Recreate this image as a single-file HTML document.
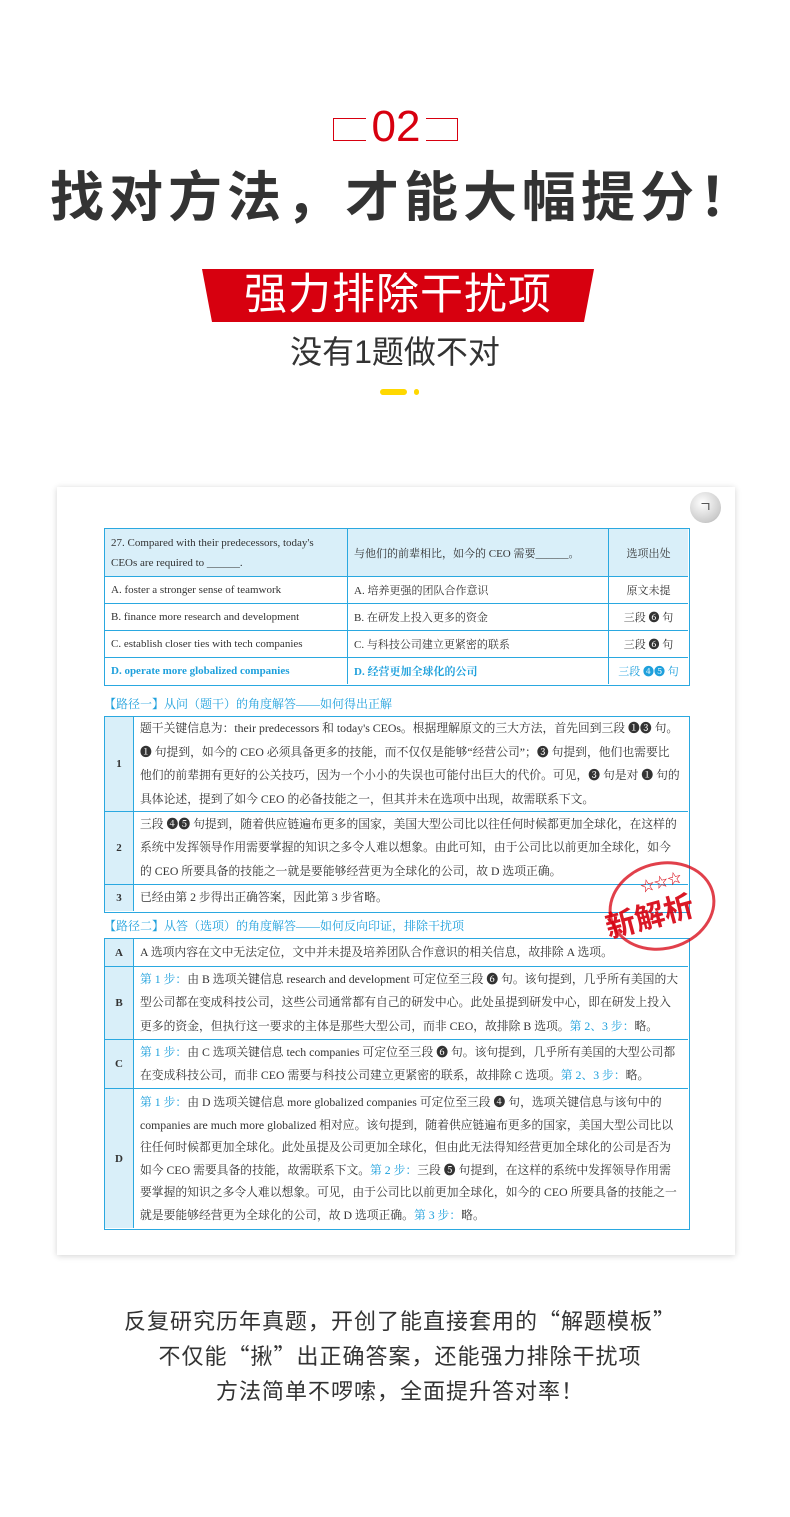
<!DOCTYPE html>
<html><head><meta charset="utf-8"><style>
*{margin:0;padding:0;box-sizing:border-box}
body{width:790px;height:1517px;background:#fff;position:relative;overflow:hidden;font-family:"Liberation Sans","Noto Sans CJK SC",sans-serif;color:#333}
.a{position:absolute}
.card{left:57px;top:487px;width:678px;height:768px;background:#fff;box-shadow:0 1px 6px rgba(0,0,0,.18)}
.t{position:absolute;border:1.5px solid #2aa8e0;font-family:"Liberation Serif","Noto Serif CJK SC",serif;font-size:11px;color:#333}
.c{position:absolute;border-right:1px solid #2aa8e0;border-bottom:1px solid #2aa8e0;display:flex;align-items:center;padding:0 6px;white-space:nowrap;overflow:hidden}
.hb{background:#d9eff9}
.bl{color:#1ea0dc;font-weight:bold}
.b{color:#1ea0dc}
.lab{position:absolute;left:104px;font-size:12px;color:#1ea0dc;font-family:"Liberation Serif","Noto Serif CJK SC",serif}
.n{justify-content:center;font-weight:bold;background:#d9eff9;padding:0}
.txt{line-height:23.5px;white-space:nowrap;font-size:11.8px}
</style></head><body>
<div class="a" style="left:333px;top:118px;width:125px;height:23px;border:1.5px solid #d7000f"></div>
<div class="a" style="left:366px;top:104px;width:60px;height:46px;background:#fff;color:#d7000f;font-size:44px;line-height:46px;text-align:center">02</div>
<div class="a" style="left:0;top:158px;width:808px;text-align:center;font-family:'Noto Sans CJK SC',sans-serif;font-size:54px;font-weight:bold;color:#333;letter-spacing:5px;line-height:70px">找对方法，才能大幅提分！</div>
<svg class="a" style="left:200px;top:269px" width="396" height="54"><polygon points="2,0 394,0 384,53 12,53" fill="#d7000f"/></svg>
<div class="a" style="left:200px;top:267px;width:396px;text-align:center;color:#fff;font-size:43px;line-height:56px;letter-spacing:1px">强力排除干扰项</div>
<div class="a" style="left:0;top:330px;width:790px;text-align:center;font-size:32px;line-height:44px;color:#333">没有1题做不对</div>
<div class="a" style="left:380px;top:389px;width:27px;height:6px;border-radius:3px;background:#ffd800"></div>
<div class="a" style="left:414px;top:389px;width:5px;height:6px;border-radius:3px;background:#ffd800"></div>

<div class="a card"></div>
<div class="a" style="left:690px;top:492px;width:31px;height:31px;border-radius:50%;background:radial-gradient(circle at 40% 35%,#fff,#ccc 70%,#999);"><span style="position:absolute;left:9px;top:5px;font-size:14px;color:#555">ㄱ</span></div>

<div class="t" style="left:104px;top:528px;width:586px;height:158px">
<div class="c hb" style="left:0;top:0;width:243px;height:48px;white-space:normal;line-height:20px;font-size:11px">27. Compared with their predecessors, today's CEOs are required to ______.</div>
<div class="c hb" style="left:243px;top:0;width:261px;height:48px">与他们的前辈相比，如今的 CEO 需要______。</div>
<div class="c hb" style="left:504px;top:0;width:79px;height:48px;justify-content:center;border-right:0">选项出处</div>
<div class="c" style="left:0;top:48px;width:243px;height:27px">A. foster a stronger sense of teamwork</div>
<div class="c" style="left:243px;top:48px;width:261px;height:27px">A. 培养更强的团队合作意识</div>
<div class="c" style="left:504px;top:48px;width:79px;height:27px;justify-content:center;border-right:0">原文未提</div>
<div class="c" style="left:0;top:75px;width:243px;height:27px">B. finance more research and development</div>
<div class="c" style="left:243px;top:75px;width:261px;height:27px">B. 在研发上投入更多的资金</div>
<div class="c" style="left:504px;top:75px;width:79px;height:27px;justify-content:center;border-right:0">三段 ❻ 句</div>
<div class="c" style="left:0;top:102px;width:243px;height:27px">C. establish closer ties with tech companies</div>
<div class="c" style="left:243px;top:102px;width:261px;height:27px">C. 与科技公司建立更紧密的联系</div>
<div class="c" style="left:504px;top:102px;width:79px;height:27px;justify-content:center;border-right:0">三段 ❻ 句</div>
<div class="c bl" style="left:0;top:129px;width:243px;height:26px;border-bottom:0">D. operate more globalized companies</div>
<div class="c bl" style="left:243px;top:129px;width:261px;height:26px;border-bottom:0">D. 经营更加全球化的公司</div>
<div class="c b" style="left:504px;top:129px;width:79px;height:26px;justify-content:center;border:0">三段 ❹❺ 句</div>
</div>

<div class="lab" style="top:695px">【路径一】从问（题干）的角度解答——如何得出正解</div>
<div class="t" style="left:104px;top:716px;width:586px;height:197px">
<div class="c n" style="left:0;top:0;width:29px;height:95px">1</div>
<div class="c txt" style="left:29px;top:0;width:554px;height:95px;border-right:0">题干关键信息为：their predecessors 和 today's CEOs。根据理解原文的三大方法，首先回到三段 ❶❸ 句。<br>❶ 句提到，如今的 CEO 必须具备更多的技能，而不仅仅是能够“经营公司”；❸ 句提到，他们也需要比<br>他们的前辈拥有更好的公关技巧，因为一个小小的失误也可能付出巨大的代价。可见，❸ 句是对 ❶ 句的<br>具体论述，提到了如今 CEO 的必备技能之一，但其并未在选项中出现，故需联系下文。</div>
<div class="c n" style="left:0;top:95px;width:29px;height:73px">2</div>
<div class="c txt" style="left:29px;top:95px;width:554px;height:73px;border-right:0">三段 ❹❺ 句提到，随着供应链遍布更多的国家，美国大型公司比以往任何时候都更加全球化，在这样的<br>系统中发挥领导作用需要掌握的知识之多令人难以想象。由此可知，由于公司比以前更加全球化，如今<br>的 CEO 所要具备的技能之一就是要能够经营更为全球化的公司，故 D 选项正确。</div>
<div class="c n" style="left:0;top:168px;width:29px;height:26px;border-bottom:0">3</div>
<div class="c txt" style="left:29px;top:168px;width:554px;height:26px;border:0">已经由第 2 步得出正确答案，因此第 3 步省略。</div>
</div>

<div class="lab" style="top:917px">【路径二】从答（选项）的角度解答——如何反向印证，排除干扰项</div>
<div class="t" style="left:104px;top:938px;width:586px;height:292px">
<div class="c n" style="left:0;top:0;width:29px;height:28px">A</div>
<div class="c txt" style="left:29px;top:0;width:554px;height:28px;border-right:0">A 选项内容在文中无法定位，文中并未提及培养团队合作意识的相关信息，故排除 A 选项。</div>
<div class="c n" style="left:0;top:28px;width:29px;height:73px">B</div>
<div class="c txt" style="left:29px;top:28px;width:554px;height:73px;border-right:0"><span><span class="b">第 1 步：</span>由 B 选项关键信息 research and development 可定位至三段 ❻ 句。该句提到，几乎所有美国的大<br>型公司都在变成科技公司，这些公司通常都有自己的研发中心。此处虽提到研发中心，即在研发上投入<br>更多的资金，但执行这一要求的主体是那些大型公司，而非 CEO，故排除 B 选项。<span class="b">第 2、3 步：</span>略。</span></div>
<div class="c n" style="left:0;top:101px;width:29px;height:49px">C</div>
<div class="c txt" style="left:29px;top:101px;width:554px;height:49px;border-right:0"><span><span class="b">第 1 步：</span>由 C 选项关键信息 tech companies 可定位至三段 ❻ 句。该句提到，几乎所有美国的大型公司都<br>在变成科技公司，而非 CEO 需要与科技公司建立更紧密的联系，故排除 C 选项。<span class="b">第 2、3 步：</span>略。</span></div>
<div class="c n" style="left:0;top:150px;width:29px;height:139px;border-bottom:0">D</div>
<div class="c txt" style="left:29px;top:150px;width:554px;height:139px;border:0;line-height:22.5px"><span><span class="b">第 1 步：</span>由 D 选项关键信息 more globalized companies 可定位至三段 ❹ 句，选项关键信息与该句中的<br>companies are much more globalized 相对应。该句提到，随着供应链遍布更多的国家，美国大型公司比以<br>往任何时候都更加全球化。此处虽提及公司更加全球化，但由此无法得知经营更加全球化的公司是否为<br>如今 CEO 需要具备的技能，故需联系下文。<span class="b">第 2 步：</span>三段 ❺ 句提到，在这样的系统中发挥领导作用需<br>要掌握的知识之多令人难以想象。可见，由于公司比以前更加全球化，如今的 CEO 所要具备的技能之一<br>就是要能够经营更为全球化的公司，故 D 选项正确。<span class="b">第 3 步：</span>略。</span></div>
</div>

<div class="a" style="left:608px;top:862px;width:108px;height:88px;border:3px solid rgba(215,0,15,.75);border-radius:50%;transform:rotate(-15deg)"></div>
<div class="a" style="left:640px;top:872px;color:#d7000f;font-size:14px;transform:rotate(-15deg)">☆☆☆</div>
<div class="a" style="left:604px;top:892px;color:#d7000f;font-size:30px;font-weight:bold;transform:rotate(-15deg);opacity:.9">新解析</div>

<div class="a" style="left:0;top:1303px;width:800px;text-align:center;font-family:'Noto Sans CJK SC',sans-serif;font-size:22px;letter-spacing:1px;line-height:35px;color:#333">反复研究历年真题，开创了能直接套用的“解题模板”<br>不仅能“揪”出正确答案，还能强力排除干扰项<br>方法简单不啰嗦，全面提升答对率！</div>
</body></html>
